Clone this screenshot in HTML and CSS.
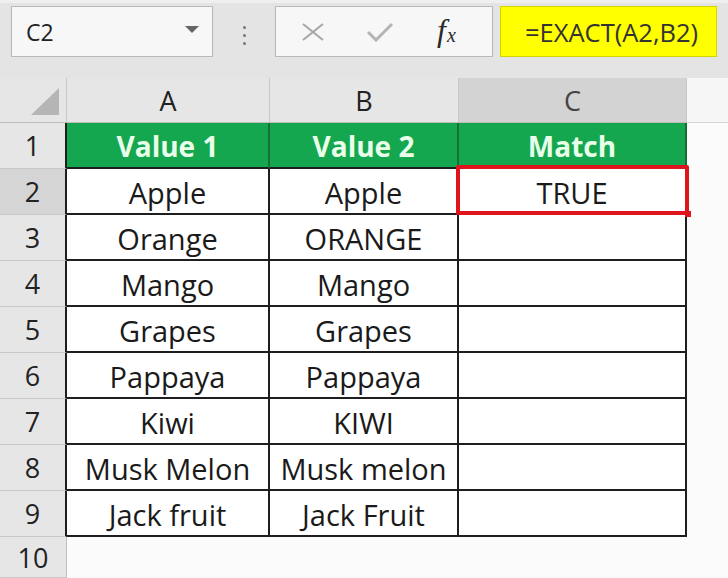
FILE: index.html
```html
<!DOCTYPE html>
<html lang="en">
<head>
    <meta charset="UTF-8">
    <title>EXACT function</title>
    <link rel="stylesheet" href="styles.css">
</head>
<body>
    <div class="toolbar">
        <div class="namebox">
            <span>C2</span>
            <svg class="caret" width="14" height="8" viewBox="0 0 14 8"><path d="M0 0 L14 0 L7 7 Z" fill="#666"/></svg>
        </div>
        <div class="dots"><i></i><i></i><i></i></div>
        <div class="fbuttons">
            <svg width="24" height="18" viewBox="0 0 24 18"><path d="M2 1 L22 17 M22 1 L2 17" stroke="#a8a8a8" stroke-width="2.2" fill="none"/></svg>
            <svg width="26" height="20" viewBox="0 0 26 20"><path d="M1 10 L9 18 L25 2" stroke="#b4b4b4" stroke-width="3" fill="none"/></svg>
            <span class="fx">f<span class="x">x</span></span>
        </div>
        <div class="formula">=EXACT(A2,B2)</div>
    </div>

    <div class="sheet">
        <div class="corner"><div class="tri"></div></div>
        <div class="ch">A</div>
        <div class="ch">B</div>
        <div class="ch sel">C</div>
        <div class="ch-rest"></div>

        <div class="rh in">1</div>
        <div class="cell head">Value 1</div>
        <div class="cell head">Value 2</div>
        <div class="cell head">Match</div>
        <div class="rest"></div>

        <div class="rh in sel">2</div>
        <div class="cell">Apple</div>
        <div class="cell">Apple</div>
        <div class="cell active">TRUE</div>
        <div class="rest"></div>

        <div class="rh in">3</div>
        <div class="cell">Orange</div>
        <div class="cell">ORANGE</div>
        <div class="cell"></div>
        <div class="rest"></div>

        <div class="rh in">4</div>
        <div class="cell">Mango</div>
        <div class="cell">Mango</div>
        <div class="cell"></div>
        <div class="rest"></div>

        <div class="rh in">5</div>
        <div class="cell">Grapes</div>
        <div class="cell">Grapes</div>
        <div class="cell"></div>
        <div class="rest"></div>

        <div class="rh in">6</div>
        <div class="cell">Pappaya</div>
        <div class="cell">Pappaya</div>
        <div class="cell"></div>
        <div class="rest"></div>

        <div class="rh in">7</div>
        <div class="cell">Kiwi</div>
        <div class="cell">KIWI</div>
        <div class="cell"></div>
        <div class="rest"></div>

        <div class="rh in">8</div>
        <div class="cell">Musk Melon</div>
        <div class="cell">Musk melon</div>
        <div class="cell"></div>
        <div class="rest"></div>

        <div class="rh in">9</div>
        <div class="cell">Jack fruit</div>
        <div class="cell">Jack Fruit</div>
        <div class="cell"></div>
        <div class="rest"></div>

        <div class="rh">10</div>
        <div class="blank"></div>
    </div>
</body>
</html>
```

FILE: styles.css
```css
body {
    margin: 0;
    width: 728px;
    height: 578px;
    overflow: hidden;
    background: #f7f7f7;
    font-family: "Open Sans", "Liberation Sans", sans-serif;
    color: #1a1a1a;
}
.toolbar {
    height: 78px;
    box-sizing: border-box;
    padding: 6px 11px 0 11px;
    background: #e4e4e4;
    border-top: 3px solid #efefef;
    display: flex;
    align-items: flex-start;
}
.namebox {
    width: 202px;
    height: 51px;
    box-sizing: border-box;
    margin-top: -3px;
    background: #f7f7f7;
    border: 1px solid #b8b8b8;
    display: flex;
    align-items: center;
    justify-content: space-between;
    padding: 0 13px 0 14px;
    font-size: 23px;
    color: #222;
}
.caret {
    margin-top: -3px;
}
.dots {
    width: 62px;
    display: flex;
    flex-direction: column;
    align-items: center;
    gap: 5px;
    padding-top: 17px;
}
.dots i {
    width: 3px;
    height: 3px;
    border-radius: 50%;
    background: #777;
}
.fbuttons {
    width: 218px;
    height: 51px;
    box-sizing: border-box;
    margin-top: -3px;
    background: #f7f7f7;
    border: 1px solid #b8b8b8;
    display: flex;
    align-items: center;
    padding: 0 20px 0 25px;
    gap: 42px;
}
.fx {
    font-family: "Liberation Serif", serif;
    font-style: italic;
    font-size: 32px;
    line-height: 1;
    color: #2a2a2a;
    margin-left: 2px;
    margin-top: -4px;
}
.fx .x {
    font-size: 20px;
    margin-left: 1px;
    position: relative;
    top: 1px;
}
.formula {
    width: 217px;
    height: 51px;
    box-sizing: border-box;
    margin-top: -3px;
    margin-left: 7px;
    background: #ffff00;
    border: 1px solid #d4d400;
    display: flex;
    align-items: center;
    padding-left: 24px;
    font-size: 25.5px;
    color: #333;
}
.sheet {
    display: grid;
    grid-template-columns: 67px 203px 189px 228px 1fr;
    grid-template-rows: 45px repeat(9, 46px) 1fr;
    height: 500px;
    background: #fff;
}
.corner {
    background: #e6e6e6;
    border-right: 1px solid #c8c8c8;
    border-bottom: 1px solid #bdbdbd;
    position: relative;
}
.tri {
    position: absolute;
    right: 7px;
    bottom: 7px;
    width: 0;
    height: 0;
    border-left: 28px solid transparent;
    border-bottom: 27px solid #b5b5b5;
}
.ch {
    background: #e6e6e6;
    border-right: 1px solid #c8c8c8;
    border-bottom: 1px solid #bdbdbd;
    display: flex;
    align-items: center;
    justify-content: center;
    font-size: 27px;
    color: #222;
}
.ch.sel {
    background: #d3d3d3;
    color: #444;
}
.ch-rest {
    background: #f6f6f6;
    border-bottom: 1px solid #d8d8d8;
}
.rh {
    background: #e6e6e6;
    border-bottom: 1px solid #c8c8c8;
    border-right: 1px solid #c0c0c0;
    display: flex;
    align-items: center;
    justify-content: center;
    font-size: 27px;
    color: #222;
}
.rh.in {
    border-right: 2px solid #1e1e1e;
}
.rh.sel {
    background: #d5d5d5;
}
.cell {
    border-right: 2px solid #1e1e1e;
    border-bottom: 2px solid #1e1e1e;
    display: flex;
    align-items: center;
    justify-content: center;
    font-size: 29px;
    padding-top: 2px;
    white-space: nowrap;
}
.cell.head {
    background: #14a74f;
    color: #e9ffe9;
    font-weight: bold;
    font-size: 28px;
    border-right-color: #176e36;
}
.cell.active {
    position: relative;
}
.cell.active::after {
    content: "";
    position: absolute;
    left: -3px;
    top: -4px;
    right: -4px;
    bottom: -2px;
    border: 4px solid #e0141c;
    border-radius: 2px;
}
.cell.active::before {
    content: "";
    position: absolute;
    right: -6px;
    bottom: -4px;
    width: 6px;
    height: 6px;
    background: #e0141c;
    z-index: 1;
}
.rest {
    background: #fbfbfb;
}
.blank {
    grid-column: 2 / 6;
    background: #fbfbfb;
}
```
